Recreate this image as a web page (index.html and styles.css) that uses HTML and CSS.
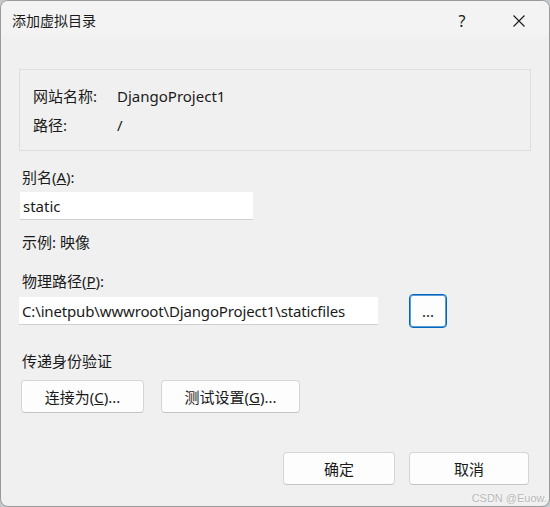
FILE: index.html
```html
<!DOCTYPE html>
<html lang="zh-CN">
<head>
    <meta charset="UTF-8">
    <meta name="viewport" content="width=device-width, initial-scale=1.0">
    <title>添加虚拟目录</title>
    <link rel="stylesheet" href="styles.css">
</head>
<body>
    <div class="dialog">
        <div class="titlebar">
            <span class="title">添加虚拟目录</span>
            <div class="title-actions">
                <span class="help">?</span>
                <span class="close">
                    <svg width="12" height="12" viewBox="0 0 12 12">
                        <path d="M0.5 0.5 L11.5 11.5 M11.5 0.5 L0.5 11.5" stroke="#1a1a1a" stroke-width="1.1" fill="none"/>
                    </svg>
                </span>
            </div>
        </div>

        <div class="content">
            <!-- 站点信息 -->
            <div class="info-box">
                <div class="info-row">
                    <span class="info-label">网站名称:</span>
                    <span>DjangoProject1</span>
                </div>
                <div class="info-row">
                    <span class="info-label">路径:</span>
                    <span>/</span>
                </div>
            </div>

            <div class="label alias-label">别名(<u>A</u>):</div>
            <div class="textbox alias-box">static</div>

            <div class="label example">示例: 映像</div>

            <div class="label path-label">物理路径(<u>P</u>):</div>
            <div class="path-row">
                <div class="textbox path-box">C:\inetpub\wwwroot\DjangoProject1\staticfiles</div>
                <button class="btn browse">...</button>
            </div>

            <div class="label auth-label">传递身份验证</div>
            <div class="auth-row">
                <button class="btn connect">连接为(<u>C</u>)...</button>
                <button class="btn test">测试设置(<u>G</u>)...</button>
            </div>

            <div class="footer">
                <button class="btn ok">确定</button>
                <button class="btn cancel">取消</button>
            </div>
        </div>

        <div class="watermark">CSDN @Euow.</div>
    </div>
</body>
</html>
```

FILE: styles.css
```css
html {
    background: #c4c7cc;
}
body {
    margin: 0;
    font-family: "Noto Sans", "Noto Sans CJK SC", sans-serif;
    font-size: 15px;
    color: #1a1a1a;
}
.dialog {
    position: relative;
    width: 550px;
    height: 507px;
    box-sizing: border-box;
    border: 1px solid #9a9a9a;
    border-radius: 8px;
    background-color: #f0f0f0;
    overflow: hidden;
}
.titlebar {
    height: 39px;
    display: flex;
    align-items: center;
    padding-left: 11px;
    background: linear-gradient(#f3f3f3 0, #f3f3f3 85%, #f0f0f0 100%);
}
.title {
    flex: 1;
    font-size: 14px;
    line-height: 20px;
}
.title-actions {
    display: flex;
    align-items: center;
    gap: 37px;
    padding-right: 20px;
}
.help {
    width: 20px;
    text-align: center;
    font-size: 16px;
}
.close {
    width: 20px;
    display: flex;
    justify-content: center;
}
.content {
    padding: 29px 18px 0 18px;
    line-height: 20px;
}
.info-box {
    border: 1px solid #dedede;
    padding: 16px 0 15px 13px;
    height: 49px;
}
.info-row {
    display: flex;
    height: 20px;
}
.info-row + .info-row {
    margin-top: 9px;
}
.info-label {
    width: 84px;
}
.label {
    padding-left: 3px;
}
.alias-label {
    margin-top: 16px;
}
.textbox {
    height: 28px;
    box-sizing: border-box;
    background-color: #ffffff;
    border-bottom: 1px solid #d0d0d0;
    padding: 4px 3px 0 3px;
    white-space: nowrap;
}
.alias-box {
    margin-top: 5px;
    width: 233px;
    margin-left: 1px;
}
.example {
    margin-top: 12px;
}
.path-label {
    margin-top: 19px;
}
.path-row {
    margin-top: 3px;
    display: flex;
    align-items: center;
    gap: 31px;
}
.path-box {
    width: 359px;
    letter-spacing: -0.15px;
}
.btn {
    font-family: inherit;
    font-size: 15px;
    color: #1a1a1a;
    background-color: #fdfdfd;
    border: 1px solid #d5d5d5;
    border-bottom-color: #c4c4c4;
    border-radius: 4px;
    height: 33px;
    padding: 0;
    line-height: 20px;
}
.browse {
    width: 38px;
    height: 34px;
    border: 1px solid #0067c0;
    box-shadow: inset 0 0 0 1px #5a9bd8;
}
.auth-label {
    margin-top: 23px;
}
.auth-row {
    margin-top: 9px;
    display: flex;
    gap: 17px;
    padding-left: 2px;
}
.connect {
    width: 123px;
}
.test {
    width: 139px;
}
.footer {
    margin-top: 39px;
    display: flex;
    justify-content: flex-end;
    gap: 14px;
    padding-right: 2px;
}
.ok {
    width: 112px;
}
.cancel {
    width: 120px;
}
.watermark {
    position: absolute;
    right: 2px;
    bottom: 2px;
    font-family: "Liberation Sans", sans-serif;
    font-size: 11px;
    color: #b8b8b8;
    text-shadow: 0 0 2px #ffffff;
}
```
